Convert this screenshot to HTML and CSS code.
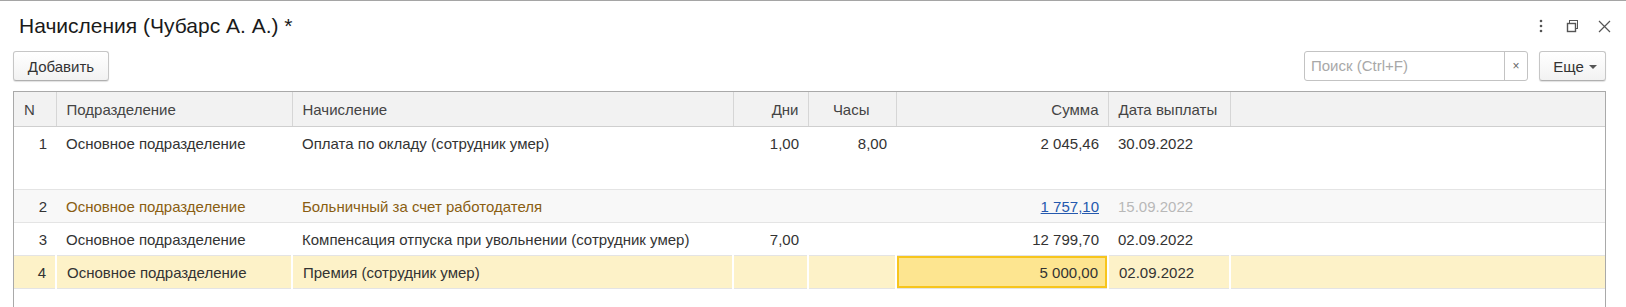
FILE: index.html
```html
<!DOCTYPE html>
<html lang="ru">
<head>
    <meta charset="UTF-8">
    <title>Начисления (Чубарс А. А.) *</title>
    <link rel="stylesheet" href="styles.css">
</head>
<body>

    <div class="window">
        <div class="titlebar">
            <h1 class="title">Начисления (Чубарс А. А.) *</h1>
            <div class="win-icons">
                <svg class="icon" width="12" height="14" viewBox="0 0 12 14">
                    <circle cx="6" cy="2" r="1.3" fill="#555"/>
                    <circle cx="6" cy="7" r="1.3" fill="#555"/>
                    <circle cx="6" cy="12" r="1.3" fill="#555"/>
                </svg>
                <svg class="icon" width="13" height="13" viewBox="0 0 13 13">
                    <rect x="3.5" y="0.5" width="8" height="8" fill="none" stroke="#555"/>
                    <rect x="1.5" y="3.5" width="8" height="8" fill="#fff" stroke="#555" stroke-width="1.4"/>
                </svg>
                <svg class="icon" width="13" height="13" viewBox="0 0 13 13">
                    <path d="M1 1 L12 12 M12 1 L1 12" stroke="#555" stroke-width="1.2"/>
                </svg>
            </div>
        </div>

        <div class="toolbar">
            <button class="btn">Добавить</button>
            <div class="spacer"></div>
            <div class="search">
                <span class="search-text">Поиск (Ctrl+F)</span>
                <span class="search-clear">×</span>
            </div>
            <button class="btn more">Еще <span class="caret"></span></button>
        </div>

        <div class="grid">
            <table>
                <colgroup>
                    <col style="width: 42px">
                    <col style="width: 236px">
                    <col style="width: 441px">
                    <col style="width: 75px">
                    <col style="width: 88px">
                    <col style="width: 212px">
                    <col style="width: 122px">
                    <col>
                </colgroup>
                <thead>
                    <tr>
                        <th>N</th>
                        <th>Подразделение</th>
                        <th>Начисление</th>
                        <th class="num">Дни</th>
                        <th class="num hours">Часы</th>
                        <th class="num">Сумма</th>
                        <th>Дата выплаты</th>
                        <th></th>
                    </tr>
                </thead>
                <tbody>
                    <tr class="tall">
                        <td class="num">1</td>
                        <td>Основное подразделение</td>
                        <td>Оплата по окладу (сотрудник умер)</td>
                        <td class="num">1,00</td>
                        <td class="num">8,00</td>
                        <td class="num">2 045,46</td>
                        <td>30.09.2022</td>
                        <td></td>
                    </tr>
                    <tr class="muted">
                        <td class="num">2</td>
                        <td class="brown">Основное подразделение</td>
                        <td class="brown">Больничный за счет работодателя</td>
                        <td></td>
                        <td></td>
                        <td class="num"><a href="#">1 757,10</a></td>
                        <td class="grey">15.09.2022</td>
                        <td></td>
                    </tr>
                    <tr>
                        <td class="num">3</td>
                        <td>Основное подразделение</td>
                        <td>Компенсация отпуска при увольнении (сотрудник умер)</td>
                        <td class="num">7,00</td>
                        <td></td>
                        <td class="num">12 799,70</td>
                        <td>02.09.2022</td>
                        <td></td>
                    </tr>
                    <tr class="current">
                        <td class="num">4</td>
                        <td>Основное подразделение</td>
                        <td>Премия (сотрудник умер)</td>
                        <td></td>
                        <td></td>
                        <td class="num selected">5 000,00</td>
                        <td>02.09.2022</td>
                        <td></td>
                    </tr>
                </tbody>
            </table>
        </div>
    </div>

</body>
</html>
```

FILE: styles.css
```css
body {
    margin: 0;
    background: #fff;
    font-family: "Liberation Sans", Arial, sans-serif;
    font-size: 15px;
    color: #333;
    overflow: hidden;
}
.window {
    border-top: 1px solid #a5a5a5;
    height: 306px;
}
.titlebar {
    height: 50px;
    display: flex;
    align-items: center;
    padding: 0 15px 0 19px;
}
.title {
    flex: 1;
    margin: 0;
    font-size: 21px;
    font-weight: normal;
    color: #1a1a1a;
}
.win-icons {
    display: flex;
    align-items: center;
    gap: 19px;
}
.icon {
    display: block;
}
.toolbar {
    display: flex;
    align-items: center;
    height: 30px;
    padding: 0 20px 0 13px;
    margin-bottom: 10px;
}
.spacer {
    flex: 1;
}
.btn {
    height: 30px;
    padding: 0 14px;
    font-family: inherit;
    font-size: 15px;
    color: #333;
    background: linear-gradient(#ffffff, #f2f2f2);
    border: 1px solid #c6c6c6;
    border-bottom-color: #b0b0b0;
    border-radius: 3px;
    box-shadow: 0 1px 1px rgba(0, 0, 0, 0.12);
}
.btn:first-child {
    width: 96px;
    padding: 0;
}
.more {
    width: 67px;
    margin-left: 11px;
    padding: 0 0 0 5px;
    display: flex;
    align-items: center;
    justify-content: center;
    gap: 5px;
}
.caret {
    width: 0;
    height: 0;
    border-left: 4px solid transparent;
    border-right: 4px solid transparent;
    border-top: 4px solid #555;
    margin-top: 2px;
}
.search {
    width: 222px;
    height: 28px;
    display: flex;
    border: 1px solid #c3c3c3;
    border-radius: 3px;
}
.search-text {
    flex: 1;
    padding-left: 6px;
    line-height: 28px;
    color: #a8a8a8;
}
.search-clear {
    width: 22px;
    border-left: 1px solid #c3c3c3;
    text-align: center;
    line-height: 28px;
    font-size: 12px;
    color: #666;
}
.grid {
    margin: 0 20px 0 13px;
    height: 220px;
    border: 1px solid #a9a9a9;
    border-bottom: none;
}
table {
    width: 100%;
    table-layout: fixed;
    border-collapse: collapse;
}
th {
    height: 34px;
    padding: 0 10px;
    background: #f2f2f2;
    border-right: 1px solid #d6d6d6;
    border-bottom: 1px solid #cfcfcf;
    text-align: left;
    font-weight: normal;
    color: #444;
    white-space: nowrap;
}
th:last-child {
    border-right: none;
}
td {
    height: 32px;
    padding: 0 10px;
    border-bottom: 1px solid #e4e4e4;
    white-space: nowrap;
    overflow: hidden;
}
.num {
    text-align: right;
    padding-right: 9px;
}
th.hours {
    padding-right: 26px;
}
.tall td {
    height: 63px;
    vertical-align: top;
    padding-top: 8px;
    box-sizing: border-box;
}
.muted td {
    background: #f8f8f8;
}
.brown {
    color: #8a5e12;
}
.grey {
    color: #b8b8b8;
}
a {
    color: #2559ae;
}
.current td {
    background: #fdf2c8;
    border-right: 2px solid #fff;
}
.current td:last-child {
    border-right: none;
}
.current td.selected {
    background: #fde590;
    box-shadow: inset 0 0 0 2px #f7c51c;
}
```
